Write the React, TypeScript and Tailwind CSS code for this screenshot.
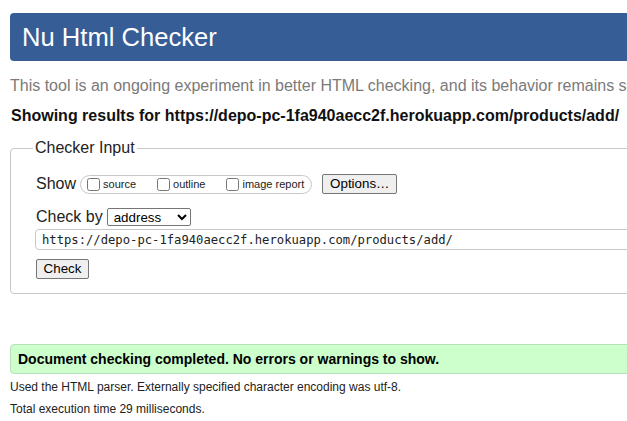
import React from "react";

const url = "https://depo-pc-1fa940aecc2f.herokuapp.com/products/add/";

function ShowOption({ label, last = false }: { label: string; last?: boolean }) {
  return (
    <label className={"flex items-center gap-[3px] " + (last ? "" : "mr-[21px]")}>
      <input type="checkbox" className="m-0 h-[13px] w-[13px]" />
      <span className="text-[11px] leading-[14px] text-[#222]">{label}</span>
    </label>
  );
}

export default function App() {
  return (
    <div className="h-[421px] w-full overflow-hidden bg-white">
      <div className="w-[780px] px-[10px] pt-[13px] font-['Liberation_Sans',Arial,sans-serif] text-[#111]">
        {/* Title bar */}
        <div className="flex h-[48px] items-center rounded-[4px] bg-[#365d96] pl-[12px]">
          <h1 className="text-[25.6px] leading-[30px] font-normal text-white">Nu Html Checker</h1>
        </div>

        <p className="mt-[16px] text-[16px] leading-[18px] text-[#7a7a7a] whitespace-nowrap">
          This tool is an ongoing experiment in better HTML checking, and its behavior remains subject to change
        </p>

        <p className="mt-[12px] pl-[1px] text-[16px] leading-[18px] font-bold whitespace-nowrap">
          Showing results for {url}
        </p>

        {/* Checker input */}
        <fieldset className="mt-[14px] rounded-[4px] border border-[#c8c8c8] pl-[25px] pb-[13px]">
          <legend className="-ml-[3px] px-[2px] text-[16px] leading-[18px] text-[#222]">Checker Input</legend>

          <div className="mt-[17px] flex h-[20px] items-center">
            <span className="mr-[4px] text-[16px] leading-[18px] text-[#222]">Show</span>
            <div className="flex h-[19px] items-center rounded-full border border-[#c8c8c8] pl-[6px] pr-[7px]">
              <ShowOption label="source" />
              <ShowOption label="outline" />
              <ShowOption label="image report" last />
            </div>
            <button className="ml-[10px] h-[20px] w-[75px] rounded-[2px] border border-[#767676] bg-[#efefef] text-[13.33px] leading-[16px] text-black">
              Options…
            </button>
          </div>

          <div className="mt-[14px] flex h-[18px] items-center">
            <span className="mr-[4px] text-[16px] leading-[18px] text-[#222]">Check by</span>
            <select className="h-[18px] w-[84px] rounded-[2px] border border-[#767676] bg-white pl-[2px] text-[13.33px] leading-[16px] text-black">
              <option>address</option>
            </select>
          </div>

          <div className="mt-[3px] -ml-[1px] flex h-[21px] items-center rounded-[4px] border border-[#c8c8c8] pl-[6px]">
            <span className="font-['DejaVu_Sans_Mono',monospace] text-[12.2px] leading-[14px] text-[#222]">{url}</span>
          </div>

          <button className="mt-[9px] h-[20px] w-[53px] rounded-[2px] border border-[#767676] bg-[#efefef] text-[13.33px] leading-[16px] text-black">
            Check
          </button>
        </fieldset>

        {/* Result */}
        <div className="mt-[50px] flex h-[30px] items-center rounded-[4px] border border-[#b8e0b8] bg-[#ccffcc] pl-[7px]">
          <p className="text-[14px] leading-[16px] font-bold text-black">
            Document checking completed. No errors or warnings to show.
          </p>
        </div>

        <p className="mt-[6px] text-[12px] leading-[14px] text-[#222]">
          Used the HTML parser. Externally specified character encoding was utf-8.
        </p>
        <p className="mt-[8px] text-[12px] leading-[14px] text-[#222]">Total execution time 29 milliseconds.</p>
      </div>
    </div>
  );
}
